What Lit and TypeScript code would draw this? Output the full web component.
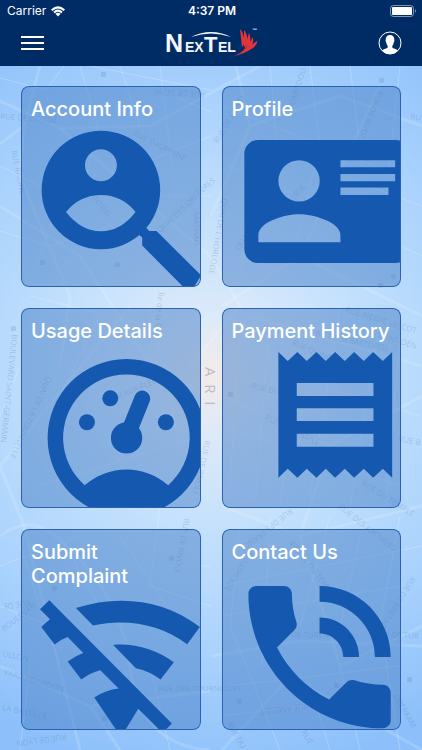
import { LitElement, html, svg, css, TemplateResult } from "lit";
import { customElement, property } from "lit/decorators.js";

type Label = [text: string, x: number, y: number, angle: number];

/** Street names: text, start point and heading in degrees. */
const STREETS: Label[] = [
  ["RUE DE SEINE", 205, 26, 184],
  ["RUE DE CONDÉ", 0, 53, 4],
  ["RUE RACINE", 11, 85, 78],
  ["RUE DAUPHINE", 133, 69, 27],
  ["DANTON", 86, 125, 52],
  ["QUAI DES ORFÈVRES", 160, 167, -43],
  ["MATHAIS", 194, 146, 90],
  ["RUE DE CONTI", 218, 78, -60],
  ["POMPIDOU", 293, 44, -72],
  ["QUAI DE L'HORLOGE", 222, 132, 100],
  ["RUE DE RIVOLI", 378, 24, 112],
  ["RU", 410, 53, 10],
  ["CORSE", 290, 140, -50],
  ["QUAI DE GESVRES", 240, 185, -62],
  ["BOULEVARD SAINT-GERMAIN", 12, 268, 96],
  ["QUAI DE LA TOURNELLE", 47, 310, 115],
  ["QUAI AUX FLEURS", 105, 338, -22],
  ["Île de la Cité", 158, 226, 95],
  ["RUE DE RIVOLI", 205, 374, 103],
  ["RUE PIERRE LESCOT", 345, 246, 17],
  ["RUE SAINT-DEN", 360, 266, 17],
  ["BD DE SÉBASTOPOL", 315, 270, 12],
  ["RUE QUINCAMPOIX", 291, 279, 22],
  ["RUE DU RENARD", 251, 322, 14],
  ["RUE DU TEMPLE", 264, 353, 26],
  ["RUE B", 398, 375, 12],
  ["RUE DU TEMPLE", 361, 419, 32],
  ["RUE DES ARCHIVES", 338, 442, 38],
  ["RUE DES FRANCS", 290, 442, 142],
  ["BOURGEOIS", 229, 526, -58],
  ["VIEILLE DU TEMPLE", 289, 477, 52],
  ["RUE DE BRETAGNE", 411, 510, 122],
  ["DE TURENNE", 291, 571, 2],
  ["RUE DE TUR", 374, 571, 2],
  ["RUE DES TOURNELLES", 158, 625, 0],
  ["RUE AMELOT", 308, 637, 172],
  ["OBERKAM", 393, 630, 60],
  ["RUE DU", 227, 658, 60],
  ["RUE", 301, 666, 60],
  ["RUE DE RIVOLI", 184, 452, 100],
  ["RUE DE", 30, 534, 172],
  ["BOULEVAR", 4, 566, -38],
  ["ULLON", 2, 590, 12],
  ["VARD BOURDON", 3, 608, 17],
  ["LA BASTILLE", 2, 644, 12],
  ["RUE DE LYON", 66, 668, 172],
];

const MAJOR_ROADS = [
  "M0 35 L60 62 L150 60 L260 0",
  "M0 78 L24 60 L40 0 M24 60 L20 110 L70 230 L60 300",
  "M0 140 L80 190 L145 290 L205 330",
  "M60 62 L210 190 L240 240 L190 300",
  "M211 150 L250 60 L236 0 M250 60 L340 30 L422 60",
  "M130 240 L0 400 L24 460 L80 684",
  "M222 240 L300 190 L380 20 M300 190 L422 250",
  "M222 330 L330 380 L422 330 M250 250 L422 300",
  "M330 380 L300 470 L340 600 L422 560",
  "M222 440 L300 470 L422 440",
  "M0 470 Q26 450 50 466 Q120 520 130 600 T210 684",
  "M211 590 L300 575 L422 580 M222 684 L290 610 L422 684",
  "M0 600 L90 640 L210 625 M90 640 L120 684",
];

const MINOR_ROADS = [
  "M0 12 L46 24 L64 0 M80 0 L98 60 L86 110 M120 0 L140 60 M160 0 L172 100",
  "M0 100 L60 130 L40 190 M0 165 L50 180 L110 160 M100 220 L60 190",
  "M150 20 L211 46 M146 96 L211 70 M160 130 L211 130 M90 0 L211 24",
  "M270 0 L280 110 L236 170 M310 0 L320 80 L290 200 M350 0 L362 100 M222 40 L400 110",
  "M230 100 L422 190 M260 90 L240 210 M340 110 L422 140 M400 0 L388 110",
  "M80 250 L130 300 L70 360 M30 230 L150 260 M100 250 L60 330 M150 240 L180 380",
  "M20 300 L0 350 M40 420 L200 370 M60 400 L90 440 M110 380 L150 440",
  "M240 260 L230 420 M270 250 L256 430 M300 280 L280 440 M340 240 L310 430",
  "M380 250 L350 440 M400 270 L386 440 M222 290 L420 350 M222 360 L400 420",
  "M0 500 L80 470 M20 480 L60 600 M60 470 L110 560 M160 440 L150 520 L211 540",
  "M120 470 L180 560 M170 500 L211 500 M0 540 L50 560 M30 600 L20 684 M150 600 L170 684",
  "M240 460 L230 560 L280 684 M270 450 L262 600 M330 450 L300 560 M360 470 L340 560",
  "M400 450 L380 560 L400 684 M222 520 L422 480 M222 550 L400 520 M230 620 L400 600",
  "M222 650 L380 630 M340 600 L360 684 M310 620 L330 684",
];

const SQUARES: [number, number][] = [
  [101, 6], [40, 194], [115, 196], [379, 12], [378, 217], [391, 208], [11, 260],
  [228, 326], [169, 490], [52, 520], [334, 617], [237, 633], [407, 611], [102, 650],
];

@customElement("city-map")
export class CityMap extends LitElement {
  static styles = css`
    :host {
      display: block;
    }
    .map {
      display: block;
      width: 100%;
      height: 100%;
    }
    .major,
    .minor {
      fill: none;
      stroke: #fff;
      stroke-linejoin: round;
    }
    .major {
      stroke-width: 3;
      stroke-opacity: 0.15;
    }
    .minor {
      stroke-width: 1;
      stroke-opacity: 0.22;
    }
    .street {
      font: 500 8px "Open Sans", "Noto Sans", sans-serif;
      fill: #42608c;
      fill-opacity: 0.24;
    }
    .city {
      font: 400 15px "Open Sans", "Noto Sans", sans-serif;
      fill: #6a6f80;
      fill-opacity: 0.4;
      white-space: pre;
    }
    .stop {
      fill: #42608c;
      fill-opacity: 0.15;
    }
  `;

  render() {
    return html`
      <svg class="map" viewBox="0 0 422 684" preserveAspectRatio="xMidYMid slice" aria-hidden="true">
        <defs>
          <radialGradient id="glow" gradientUnits="userSpaceOnUse" cx="211" cy="310" r="400">
            <stop offset="0" stop-color="#f3ece8" />
            <stop offset="0.15" stop-color="#dceafa" />
            <stop offset="0.4" stop-color="#c2e0fd" />
            <stop offset="0.7" stop-color="#a9d2fd" />
            <stop offset="1" stop-color="#8dc0fa" />
          </radialGradient>
        </defs>
        <rect width="422" height="684" fill="url(#glow)" />
        ${MAJOR_ROADS.map((d) => svg`<path class="major" d=${d} />`)}
        ${MINOR_ROADS.map((d) => svg`<path class="minor" d=${d} />`)}
        ${SQUARES.map(([x, y]) => svg`<rect class="stop" x=${x} y=${y} width="5" height="5" rx="1" />`)}
        ${STREETS.map(
          ([text, x, y, a]) =>
            svg`<text class="street" transform="translate(${x} ${y}) rotate(${a})">${text}</text>`,
        )}
        <text class="city" transform="translate(205 301) rotate(90)">A  R  I</text>
      </svg>
    `;
  }
}

const ICONS: Record<string, TemplateResult> = {
  account: html`
    <svg viewBox="63 60 539 600" aria-hidden="true">
      <path
        fill-rule="evenodd"
        d="M303 193a178 178 0 1 1 0 356a178 178 0 1 1 0-356z
           M303 249a48 48 0 1 0 0 96a48 48 0 1 0 0-96z
           M198 437Q240 386 303 386T407 437Q362 495 303 495T198 437z"
      />
      <path d="M408 497L430 475L441 487L448 494H470L604 628L570 682L427 538V514L419 507z" />
    </svg>
  `,
  profile: html`
    <svg viewBox="32 60 538 600" aria-hidden="true">
      <path
        fill-rule="evenodd"
        d="M140 221H552a41 41 0 0 1 41 41V549a41 41 0 0 1-41 41H140a41 41 0 0 1-41-41V262a41 41 0 0 1 41-41z
           M263 282a62 62 0 1 0 0 124a62 62 0 1 0 0-124z
           M141 528V507C141 466 222 444 263 444S387 466 387 507V528z
           M387 282H551V303H387z M387 323H551V345H387z M387 364H531V386H387z"
      />
    </svg>
  `,
  usage: html`
    <svg viewBox="63 52 539 600" aria-hidden="true">
      <path
        fill-rule="evenodd"
        d="M380 204a237 237 0 1 1 0 474a237 237 0 1 1 0-474z
           M254 583A190 190 0 1 1 505 583Q448 536 380 536T254 583z"
      />
      <circle cx="261" cy="394" r="24" />
      <circle cx="331" cy="322" r="24" />
      <circle cx="498" cy="394" r="24" />
      <circle cx="380" cy="441" r="47" />
      <path class="needle" d="M427 323L390 415" />
    </svg>
  `,
  payment: html`
    <svg viewBox="32 52 538 600" aria-hidden="true">
      <path
        fill-rule="evenodd"
        d="M201 183L229 210L258 183L286 210L315 183L343 210L371 183L400 210L428 183L457 210L485 183L514 210L542 183
           V560L514 533L485 560L457 533L428 560L400 533L371 560L343 533L315 560L286 533L258 560L229 533L201 560z
           M256 276H486V315H256z M256 352H486V390H256z M256 428H486V467H256z"
      />
    </svg>
  `,
  complaint: html`
    <svg viewBox="63 32 539 600" aria-hidden="true">
      <path
        d="M120 272L148 245L516 615L488 643L415 571L367 650L346 630L283 537Q318 514 356 510L301 455Q272 462 244 483
           L203 429Q226 411 250 403L203 355Q182 362 164 378L124 325Q136 313 150 302z"
      />
      <path d="M228 268C352 228 490 240 600 325L562 377C478 314 376 300 279 321z" />
      <path d="M340 379C405 373 470 393 522 431L482 483Q450 458 408 449z" />
    </svg>
  `,
  contact: html`
    <svg viewBox="32 32 538 600" aria-hidden="true">
      <path
        transform="translate(40 131) scale(23.7)"
        d="M19 12h2c0-4.97-4.03-9-9-9v2c3.87 0 7 3.13 7 7zm-4 0h2c0-2.76-2.24-5-5-5v2c1.66 0 3 1.34 3 3zm5 3.5c-1.25 0-2.45-.2-3.57-.57-.35-.11-.74-.03-1.02.24l-2.2 2.2c-2.83-1.44-5.15-3.75-6.59-6.59l2.2-2.21c.28-.26.36-.65.25-1C8.7 6.45 8.5 5.25 8.5 4c0-.55-.45-1-1-1H4c-.55 0-1 .45-1 1 0 9.39 7.61 17 17 17 .55 0 1-.45 1-1v-3.5c0-.55-.45-1-1-1z"
      />
    </svg>
  `,
};

@customElement("menu-tile")
export class MenuTile extends LitElement {
  static styles = css`
    :host {
      display: block;
    }
    .tile {
      display: grid;
      box-sizing: border-box;
      width: 100%;
      aspect-ratio: 179 / 200;
      padding: 0;
      border: 0;
      border-radius: 8px;
      overflow: hidden;
      background: rgba(70, 126, 198, 0.5);
      color: #fff;
      font: 500 20px/24px Inter, "Liberation Sans", sans-serif;
      text-align: left;
      cursor: pointer;
    }
    .title,
    svg {
      grid-area: 1 / 1;
    }
    .title {
      align-self: stretch;
      padding: 11px 4px 10px 10px;
      border-radius: 8px;
      box-shadow: inset 0 0 0 1px #2c61b4;
    }
    svg {
      width: 100%;
      height: 100%;
      fill: #1458b0;
    }
    .needle {
      fill: none;
      stroke: #1458b0;
      stroke-width: 48;
      stroke-linecap: round;
    }
  `;

  @property() label = "";
  @property() icon = "";

  render() {
    return html`
      <button class="tile" type="button">
        ${ICONS[this.icon]}
        <span class="title">${this.label}</span>
      </button>
    `;
  }
}

@customElement("app-root")
export class AppRoot extends LitElement {
  static styles = css`
    :host {
      display: flex;
      flex-direction: column;
      min-height: 100vh;
      font-family: Inter, "Liberation Sans", sans-serif;
      color: #fff;
    }
    header {
      background: #002c66;
    }
    .status {
      display: grid;
      grid-template-columns: 1fr auto 1fr;
      align-items: center;
      height: 22px;
      padding: 0 5px 0 7px;
      font-size: 12px;
      line-height: 22px;
    }
    .carrier {
      display: flex;
      align-items: center;
      gap: 5px;
    }
    .time {
      font-weight: 600;
    }
    .battery {
      justify-self: end;
    }
    .bar {
      display: grid;
      grid-template-columns: 1fr auto 1fr;
      align-items: center;
      height: 42px;
      padding: 0 20px 2px;
    }
    .bar button {
      display: flex;
      padding: 0;
      border: 0;
      background: none;
      color: inherit;
      cursor: pointer;
    }
    .user {
      justify-self: end;
    }
    svg {
      display: block;
    }
    .word {
      font-family: "Liberation Sans", Arial, sans-serif;
      font-weight: 700;
      fill: #f4f6fb;
    }
    .big {
      font-size: 25px;
    }
    .stem {
      font-size: 22px;
    }
    .small {
      font-size: 14px;
    }
    .mark {
      font-size: 5px;
    }
    main {
      position: relative;
      flex: 1;
      padding: 20px 21px;
    }
    city-map {
      position: absolute;
      inset: 0;
    }
    .tiles {
      position: relative;
      display: grid;
      grid-template-columns: 1fr 1fr;
      gap: 21px;
    }
  `;

  private tiles = [
    { label: "Account Info", icon: "account" },
    { label: "Profile", icon: "profile" },
    { label: "Usage Details", icon: "usage" },
    { label: "Payment History", icon: "payment" },
    { label: "Submit Complaint", icon: "complaint" },
    { label: "Contact Us", icon: "contact" },
  ];

  render() {
    return html`
      <header>
        <div class="status">
          <span class="carrier">
            Carrier
            <svg width="14" height="11" viewBox="0 0 42 32" fill="none" stroke="#fff" stroke-width="6" aria-hidden="true">
              <path d="M2 12Q21-5 40 12M9 19Q21 8 33 19" />
              <path d="M13 23Q21 16 29 23L21 31z" fill="#fff" stroke="none" />
            </svg>
          </span>
          <span class="time">4:37 PM</span>
          <svg class="battery" width="27" height="12" viewBox="0 0 27 12" aria-hidden="true">
            <rect x="0.5" y="0.5" width="23" height="11" rx="3" fill="none" stroke="#fff" stroke-opacity="0.5" />
            <rect x="2" y="2" width="20" height="8" rx="1" fill="#fff" />
            <path d="M25 4q2 2 0 4z" fill="#fff" fill-opacity="0.5" />
          </svg>
        </div>
        <nav class="bar">
          <button type="button" aria-label="Menu">
            <svg width="24" height="16" viewBox="0 0 24 16" stroke="#fff" stroke-width="2" aria-hidden="true">
              <path d="M1 2H24M1 8H24M1 14H24" />
            </svg>
          </button>
          <svg width="96" height="32" viewBox="163 27 96 32" role="img" aria-label="NexTel">
            <text class="word big" x="165" y="52">N</text>
            <text class="word small" x="185" y="52">EX</text>
            <text class="word stem" x="204" y="52">T</text>
            <text class="word small" x="218" y="52">EL</text>
            <path d="M191 37Q211 27 231 37Q211 30 191 37z" fill="#f4f6fb" />
            <g fill="#e2353b">
              <path d="M240 29Q243 31 245 43L242 47z" />
              <path d="M244 30Q247 33 248 43L244 47z" />
              <path d="M249 33Q251 37 250 43L244 50z" />
              <path d="M253 37Q254 41 252 45L243 53z" />
              <path d="M257 41Q258 44 253 48Q244 54 234 56Q240 54 245 49z" />
            </g>
            <text class="word mark" x="252" y="32">™</text>
          </svg>
          <button class="user" type="button" aria-label="Account">
            <svg width="24" height="24" viewBox="0 0 24 24" aria-hidden="true">
              <circle cx="12" cy="12" r="11" fill="none" stroke="#fff" />
              <path
                fill="#fff"
                d="M12 4C9 4 7.500 6 7.700 9C7.500 9.500 7.700 11 8.300 11.500C8.500 13 9 14 9.700 14.800V16.500C9 17.500 5.500 18 4 19.500Q7.500 23 12 23T20 19.500C18.500 18 15 17.500 14.300 16.500V14.800C15 14 15.500 13 15.700 11.500C16.300 11 16.500 9.500 16.300 9C16.500 6 15 4 12 4z"
              />
            </svg>
          </button>
        </nav>
      </header>
      <main>
        <city-map></city-map>
        <div class="tiles">
          ${this.tiles.map((t) => html`<menu-tile .label=${t.label} .icon=${t.icon}></menu-tile>`)}
        </div>
      </main>
    `;
  }
}
